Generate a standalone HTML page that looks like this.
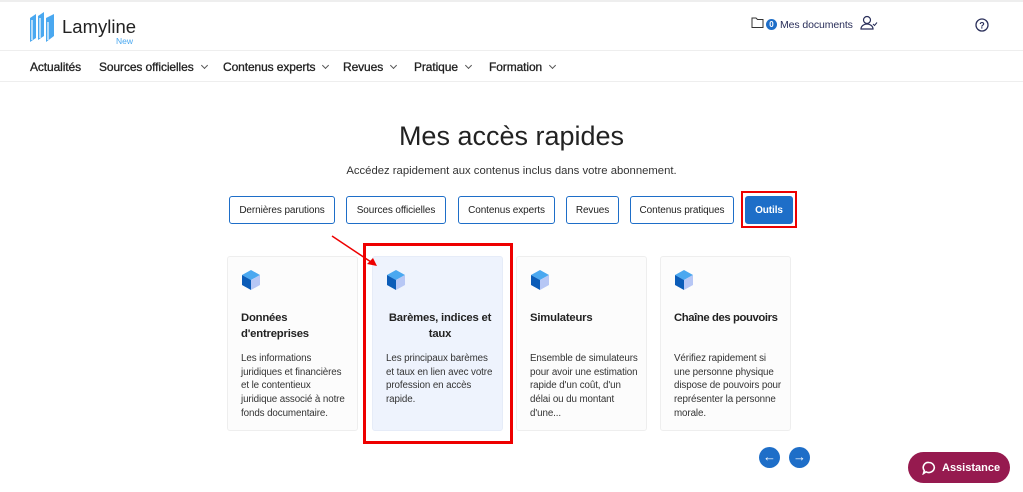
<!DOCTYPE html><html><head><meta charset="utf-8"><style>
*{box-sizing:border-box;margin:0;padding:0}
body{width:1023px;height:492px;overflow:hidden;background:#fff;font-family:"Liberation Sans",Arial,sans-serif;color:#222;position:relative}
.a{position:absolute}
.nav{font-size:12px;color:#222;top:60px;font-weight:normal;letter-spacing:-0.1px;-webkit-text-stroke:0.3px #222}
.chev{display:inline-block;width:5px;height:5px;border-right:1.2px solid #555;border-bottom:1.2px solid #555;transform:rotate(45deg);margin-left:8px;position:relative;top:-3px;-webkit-text-stroke:0}
.btn{top:196px;height:28px;border:1px solid #1e6ec8;border-radius:3px;font-size:10px;color:#222;display:flex;align-items:center;justify-content:center;background:#fff;letter-spacing:-0.1px}
.card{top:256px;width:131px;height:175px;border:1px solid #eee;border-radius:3px;background:#fcfcfc;padding:12px 8px 12px 13px}
.card h3{font-size:11.3px;font-weight:bold;color:#222;line-height:16px;margin-top:14px;letter-spacing:-0.2px}
.card p{font-size:9.8px;color:#333;line-height:13.7px;margin-top:10px;letter-spacing:-0.1px}
.cube{width:20px;height:22px}
</style></head><body>
<div class="a" style="left:0;top:0;width:1023px;height:2px;background:#eee"></div>
<svg class="a" style="left:28px;top:12px" width="28" height="32" viewBox="0 0 28 32"><path d="M2 6 L8 2 L8 26 L2 30Z M10 4 L16 0 L16 24 L10 28Z M18 6 L26 2 L26 24 L18 30Z" fill="#4aa8f0"/><path d="M4 8 L4 28 M12 6 L12 26 M20 10 L20 28" stroke="#fff" stroke-width="1.2"/></svg>
<div class="a" style="left:62px;top:16px;font-size:18.5px;color:#222">Lamyline</div>
<div class="a" style="left:116px;top:36px;font-size:8.5px;color:#4aa8f0">New</div>
<svg class="a" style="left:751px;top:17px" width="13" height="11"><path d="M1 1h4l1.5 1.5H12v8H1z" fill="none" stroke="#333" stroke-width="1"/></svg>
<div class="a" style="left:766px;top:19px;width:11px;height:11px;border-radius:50%;background:#1e6ec8;color:#fff;font-size:8px;text-align:center;line-height:11px;font-weight:bold">0</div>
<div class="a" style="left:780px;top:19px;font-size:10.5px;color:#2a2f5a;letter-spacing:-0.1px">Mes documents</div>
<svg class="a" style="left:860px;top:15px" width="18" height="16"><circle cx="7" cy="5" r="3.5" fill="none" stroke="#2a2f5a" stroke-width="1.2"/><path d="M1 14c0-3 3-5 6-5s6 2 6 5z" fill="none" stroke="#2a2f5a" stroke-width="1.2"/><path d="M13 9l1.5 1.5 2.5-3" fill="none" stroke="#2a2f5a" stroke-width="1"/></svg>
<svg class="a" style="left:975px;top:18px" width="14" height="14"><circle cx="7" cy="7" r="6" fill="none" stroke="#2a2f5a" stroke-width="1.3"/><text x="7" y="10.5" font-size="9" text-anchor="middle" fill="#2a2f5a" font-family="Liberation Sans" font-weight="bold">?</text></svg>
<div class="a" style="left:0;top:50px;width:1023px;height:1px;background:#eee"></div>
<div class="a nav" style="left:30px">Actualités</div>
<div class="a nav" style="left:99px">Sources officielles<span class="chev"></span></div>
<div class="a nav" style="left:223px">Contenus experts<span class="chev"></span></div>
<div class="a nav" style="left:343px">Revues<span class="chev"></span></div>
<div class="a nav" style="left:414px">Pratique<span class="chev"></span></div>
<div class="a nav" style="left:489px">Formation<span class="chev"></span></div>
<div class="a" style="left:0;top:81px;width:1023px;height:1px;background:#eee"></div>
<div class="a" style="left:0;width:1023px;top:121px;text-align:center;font-size:27px;color:#222">Mes accès rapides</div>
<div class="a" style="left:0;width:1023px;top:165px;text-align:center;font-size:11.3px;color:#333">Accédez rapidement aux contenus inclus dans votre abonnement.</div>
<div class="a btn" style="left:229px;width:106px">Dernières parutions</div>
<div class="a btn" style="left:346px;width:100px">Sources officielles</div>
<div class="a btn" style="left:458px;width:97px">Contenus experts</div>
<div class="a btn" style="left:566px;width:53px">Revues</div>
<div class="a btn" style="left:630px;width:104px">Contenus pratiques</div>
<div class="a btn" style="left:745px;width:48px;background:#1e6ec8;color:#fff;font-weight:bold">Outils</div>
<div class="a" style="left:741px;top:191px;width:56px;height:37px;border:2px solid #e00"></div>
<svg width="0" height="0" style="position:absolute"><defs><g id="cb"><path d="M10 1L19 6L10 11L1 6Z" fill="#4aa8f0"/><path d="M1 6L10 11L10 21L1 16Z" fill="#0b5cb8"/><path d="M19 6L10 11L10 21L19 16Z" fill="#b7c7f5"/></g></defs></svg>
<div class="a card" style="left:227px"><svg class="cube"><use href="#cb"/></svg><h3>Données d'entreprises</h3><p>Les informations juridiques et financières et le contentieux juridique associé à notre fonds documentaire.</p></div>
<div class="a card" style="left:372px;background:#eef3fd;border-color:#e6ecf8"><svg class="cube"><use href="#cb"/></svg><h3 style="text-align:center">Barèmes, indices et taux</h3><p>Les principaux barèmes et taux en lien avec votre profession en accès rapide.</p></div>
<div class="a card" style="left:516px"><svg class="cube"><use href="#cb"/></svg><h3>Simulateurs</h3><p style="margin-top:26px">Ensemble de simulateurs pour avoir une estimation rapide d'un coût, d'un délai ou du montant d'une...</p></div>
<div class="a card" style="left:660px"><svg class="cube"><use href="#cb"/></svg><h3 style="white-space:nowrap;letter-spacing:-0.4px">Chaîne des pouvoirs</h3><p style="margin-top:26px">Vérifiez rapidement si une personne physique dispose de pouvoirs pour représenter la personne morale.</p></div>
<div class="a" style="left:363px;top:243px;width:150px;height:201px;border:3px solid #e00"></div>
<svg class="a" style="left:330px;top:234px" width="50" height="36"><path d="M2 2L44 30" stroke="#e00" stroke-width="1.5"/><path d="M47 32L37 30L43 24Z" fill="#e00"/></svg>
<div class="a" style="left:759px;top:447px;width:21px;height:21px;border-radius:50%;background:#1e6ec8;color:#fff;font-size:13px;text-align:center;line-height:20px">←</div>
<div class="a" style="left:789px;top:447px;width:21px;height:21px;border-radius:50%;background:#1e6ec8;color:#fff;font-size:13px;text-align:center;line-height:20px">→</div>
<div class="a" style="left:908px;top:452px;width:102px;height:31px;border-radius:16px;background:#961a4f;color:#fff;font-size:11px;font-weight:bold;display:flex;align-items:center;padding-left:14px"><svg width="14" height="14" style="margin-right:6px"><path d="M7 1.5a5.5 5 0 1 1-3 9.3L1.5 12.5l.8-3A5 5 0 0 1 7 1.5z" fill="none" stroke="#fff" stroke-width="1.6"/></svg>Assistance</div>
</body></html>
